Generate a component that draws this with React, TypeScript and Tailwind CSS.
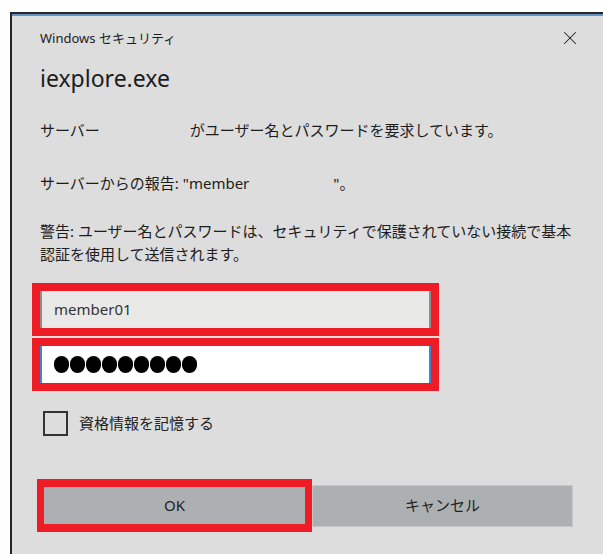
import { X } from 'lucide-react';

const font = { fontFamily: '"Noto Sans", "Noto Sans CJK JP", sans-serif' };

function Dots({ count }: { count: number }) {
  return (
    <div className="flex items-center gap-[1px]">
      {Array.from({ length: count }).map((_, i) => (
        <span key={i} className="block w-[15px] h-[17px] rounded-full bg-black" />
      ))}
    </div>
  );
}

export default function App() {
  return (
    <div style={font} className="w-[603px] h-[554px] bg-white overflow-hidden pt-[12px] pl-[10px]">
      <div className="h-full border-l-2 border-t-2 border-[#2b2424] bg-[#dddddd] flex flex-col">
        <div className="h-[2px] bg-[#6393c6]" />

        <div className="pl-[28px] pr-[30px] text-[#1c1c1c]">
          {/* title bar */}
          <div className="flex items-center justify-between pt-[12px] h-[32px]">
            <span className="text-[13px] leading-[20px]">Windows セキュリティ</span>
            <X className="w-[22px] h-[22px] mr-[-8px] text-[#222]" strokeWidth={1.1} />
          </div>

          <h1 className="mt-[15px] text-[23px] leading-[30px] font-normal">iexplore.exe</h1>

          <p className="mt-[26px] text-[15px] leading-[22px]">
            サーバー<span className="inline-block w-[90px]" />がユーザー名とパスワードを要求しています。
          </p>

          <p className="mt-[31px] text-[15px] leading-[22px]">
            サーバーからの報告: "member<span className="inline-block w-[84px]" />"。
          </p>

          <p className="mt-[26px] text-[15px] leading-[23px] whitespace-nowrap">
            警告: ユーザー名とパスワードは、セキュリティで保護されていない接続で基本
            <br />
            認証を使用して送信されます。
          </p>

          {/* user name */}
          <div className="mt-[17px] -ml-[8px] w-[407px] border-[8px] border-[#ee1c25]">
            <div className="h-[37px] bg-[#e9e9e7] border-x-2 border-[#8d8d8d] pl-[12px] flex items-center text-[15px] text-[#333]">
              member01
            </div>
          </div>

          {/* password */}
          <div className="mt-[2px] -ml-[8px] w-[407px] border-[8px] border-[#ee1c25]">
            <div className="h-[37px] bg-white border-x-2 border-[#3a86d4] pl-[12px] flex items-center">
              <Dots count={9} />
            </div>
          </div>

          {/* remember credentials */}
          <label className="mt-[20px] ml-[3px] flex items-center gap-[11px]">
            <span className="block w-[25px] h-[25px] border-2 border-[#333]" />
            <span className="text-[15px] text-[#222]">資格情報を記憶する</span>
          </label>

          {/* buttons */}
          <div className="mt-[43px] -ml-[3px] flex items-center">
            <div className="w-[275px] border-[7px] border-y-[8px] border-[#ee1c25]">
              <button className="w-full h-[37px] bg-[#adb0b3] text-[15px] text-[#222]">OK</button>
            </div>
            <button className="w-[261px] h-[42px] bg-[#adb0b3] border border-[#c4c6c8] text-[15px] text-[#222]">
              キャンセル
            </button>
          </div>
        </div>
      </div>
    </div>
  );
}
